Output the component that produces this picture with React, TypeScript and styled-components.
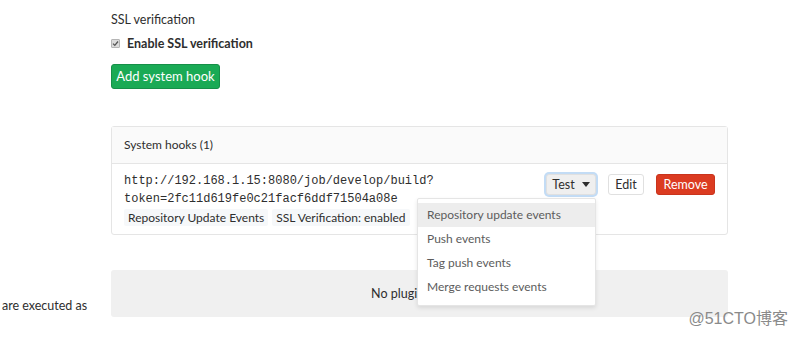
import styled, { createGlobalStyle } from 'styled-components';

const GlobalStyle = createGlobalStyle`
  html, body {
    margin: 0;
    padding: 0;
    background: #fff;
  }
  body {
    font-family: Lato, "Open Sans", Arial, sans-serif;
    font-size: 12.5px;
    color: #2e2e2e;
  }
`;

const Page = styled.div`
  position: relative;
  width: 796px;
  height: 338px;
  overflow: hidden;
  display: flex;
  flex-direction: column;
  padding-top: 11px;
  box-sizing: border-box;
`;

const Section = styled.div<{ $gap?: number }>`
  display: grid;
  grid-template-columns: 111px 617px;
  margin-top: ${(p) => p.$gap ?? 0}px;
`;

const Side = styled.div`
  padding: 27px 0 0 2px;
  font-size: 12.5px;
  line-height: 17px;
  color: #2e2e2e;
  white-space: nowrap;
`;

const Main = styled.div`
  grid-column: 2;
  display: flex;
  flex-direction: column;
`;

const Label = styled.div`
  font-size: 12.5px;
  line-height: 17px;
  margin-bottom: 7px;
`;

const CheckRow = styled.label`
  display: flex;
  align-items: center;
  gap: 7px;
  font-weight: 700;
  font-size: 12.5px;
  line-height: 17px;
`;

const CheckBox = styled.span`
  width: 7px;
  height: 7px;
  border-radius: 1px;
  background: #dcdcdc;
  border: 1px solid #b5b5b5;
  display: inline-flex;
  align-items: center;
  justify-content: center;
`;

type Variant = 'green' | 'red' | 'default' | 'active';

const Btn = styled.button<{ $variant?: Variant }>`
  font-family: inherit;
  font-size: 12.5px;
  line-height: 17px;
  height: 21px;
  box-sizing: border-box;
  border-radius: 3px;
  cursor: pointer;
  border: 1px solid
    ${(p) =>
      p.$variant === 'green' ? '#168f48' : p.$variant === 'red' ? '#c9341d' : '#e0e0e0'};
  background: ${(p) =>
    p.$variant === 'green'
      ? '#1aaa55'
      : p.$variant === 'red'
      ? '#db3b21'
      : p.$variant === 'active'
      ? '#efefef'
      : '#fff'};
  color: ${(p) => (p.$variant === 'green' || p.$variant === 'red' ? '#fff' : '#2e2e2e')};
  padding: 0 10px;
  box-shadow: ${(p) => (p.$variant === 'active' ? '0 0 0 2px #c3dcf5' : 'none')};
  display: inline-flex;
  align-items: center;
  justify-content: center;
  gap: 8px;
`;

const AddBtn = styled(Btn)`
  align-self: flex-start;
  margin-top: 12px;
  padding: 0;
  width: 109px;
  height: 25px;
  font-size: 13px;
`;

const Panel = styled.div`
  margin-top: 37px;
  border: 1px solid #e5e5e5;
  border-radius: 3px;
`;

const PanelHeader = styled.div`
  background: #fafafa;
  border-bottom: 1px solid #e5e5e5;
  padding: 10px 12px;
  line-height: 16px;
  font-size: 12px;
`;

const HookRow = styled.div`
  display: flex;
  justify-content: space-between;
  align-items: flex-start;
  padding: 8px 12px 8px;
`;

const HookInfo = styled.div`
  display: flex;
  flex-direction: column;
`;

const Url = styled.div`
  font-family: "Liberation Mono", "DejaVu Sans Mono", monospace;
  font-size: 12px;
  line-height: 18px;
  color: #2e2e2e;
  width: 320px;
  word-break: break-all;
`;

const Badges = styled.div`
  display: flex;
  gap: 4px;
  margin-top: 1px;
`;

const Badge = styled.span`
  background: #f6f8fa;
  color: #2e2e2e;
  font-size: 12px;
  line-height: 17px;
  padding: 0 4px;
  border-radius: 2px;
`;

const Actions = styled.div`
  display: flex;
  gap: 12px;
  margin-top: 2px;
`;

const TestWrap = styled.div`
  position: relative;
`;

const TestBtn = styled(Btn)`
  width: 50px;
  padding: 0;
  gap: 7px;
`;

const EditBtn = styled(Btn)`
  width: 36px;
  padding: 0;
`;

const RemoveBtn = styled(Btn)`
  width: 59px;
  padding: 0;
`;

const Menu = styled.ul`
  position: absolute;
  top: 24px;
  right: 0;
  width: 179px;
  box-sizing: border-box;
  margin: 0;
  padding: 4px 0 6px;
  list-style: none;
  background: #fff;
  border: 1px solid #e5e5e5;
  border-radius: 2px;
  box-shadow: 0 2px 4px rgba(0, 0, 0, 0.1);
  z-index: 5;
`;

const MenuItem = styled.li<{ $hover?: boolean }>`
  padding: 0 9px;
  line-height: 24px;
  font-size: 12px;
  color: #5c5c5c;
  background: ${(p) => (p.$hover ? '#ededed' : 'transparent')};
  white-space: nowrap;
`;

const Empty = styled.div`
  grid-column: 2;
  height: 47px;
  background: #f0f0f0;
  border-radius: 3px;
  display: flex;
  align-items: center;
  justify-content: center;
  color: #2e2e2e;
  font-size: 12.5px;
`;

const Watermark = styled.div`
  position: absolute;
  right: 8px;
  bottom: 9px;
  font-size: 16px;
  color: #8a8a8a;
  font-family: "Liberation Sans", "Noto Sans CJK SC", sans-serif;
`;

const menuItems = [
  'Repository update events',
  'Push events',
  'Tag push events',
  'Merge requests events',
];

const App: React.FC = () => {
  return (
    <>
      <GlobalStyle />
      <Page>
        <Section>
          <Main>
            <Label>SSL verification</Label>
            <CheckRow>
              <CheckBox>
                <svg width="7" height="7" viewBox="0 0 7 7">
                  <path d="M1 3.6 L2.8 5.4 L6 1.5" stroke="#555" strokeWidth="1.3" fill="none" />
                </svg>
              </CheckBox>
              Enable SSL verification
            </CheckRow>
            <AddBtn type="button" $variant="green">
              Add system hook
            </AddBtn>
            <Panel>
              <PanelHeader>System hooks (1)</PanelHeader>
              <HookRow>
                <HookInfo>
                  <Url>
                    http://192.168.1.15:8080/job/develop/build?
                    <br />
                    token=2fc11d619fe0c21facf6ddf71504a08e
                  </Url>
                  <Badges>
                    <Badge>Repository Update Events</Badge>
                    <Badge>SSL Verification: enabled</Badge>
                  </Badges>
                </HookInfo>
                <Actions>
                  <TestWrap>
                    <TestBtn type="button" $variant="active">
                      Test
                      <svg width="8" height="5" viewBox="0 0 8 5">
                        <path d="M0 0 H8 L4 5 Z" fill="#2e2e2e" />
                      </svg>
                    </TestBtn>
                    <Menu>
                      {menuItems.map((item, i) => (
                        <MenuItem key={item} $hover={i === 0}>
                          {item}
                        </MenuItem>
                      ))}
                    </Menu>
                  </TestWrap>
                  <EditBtn type="button">Edit</EditBtn>
                  <RemoveBtn type="button" $variant="red">
                    Remove
                  </RemoveBtn>
                </Actions>
              </HookRow>
            </Panel>
          </Main>
        </Section>
        <Section $gap={35}>
          <Side>are executed as</Side>
          <Empty>No plugins found.</Empty>
        </Section>
        <Watermark>@51CTO博客</Watermark>
      </Page>
    </>
  );
};

export default App;
